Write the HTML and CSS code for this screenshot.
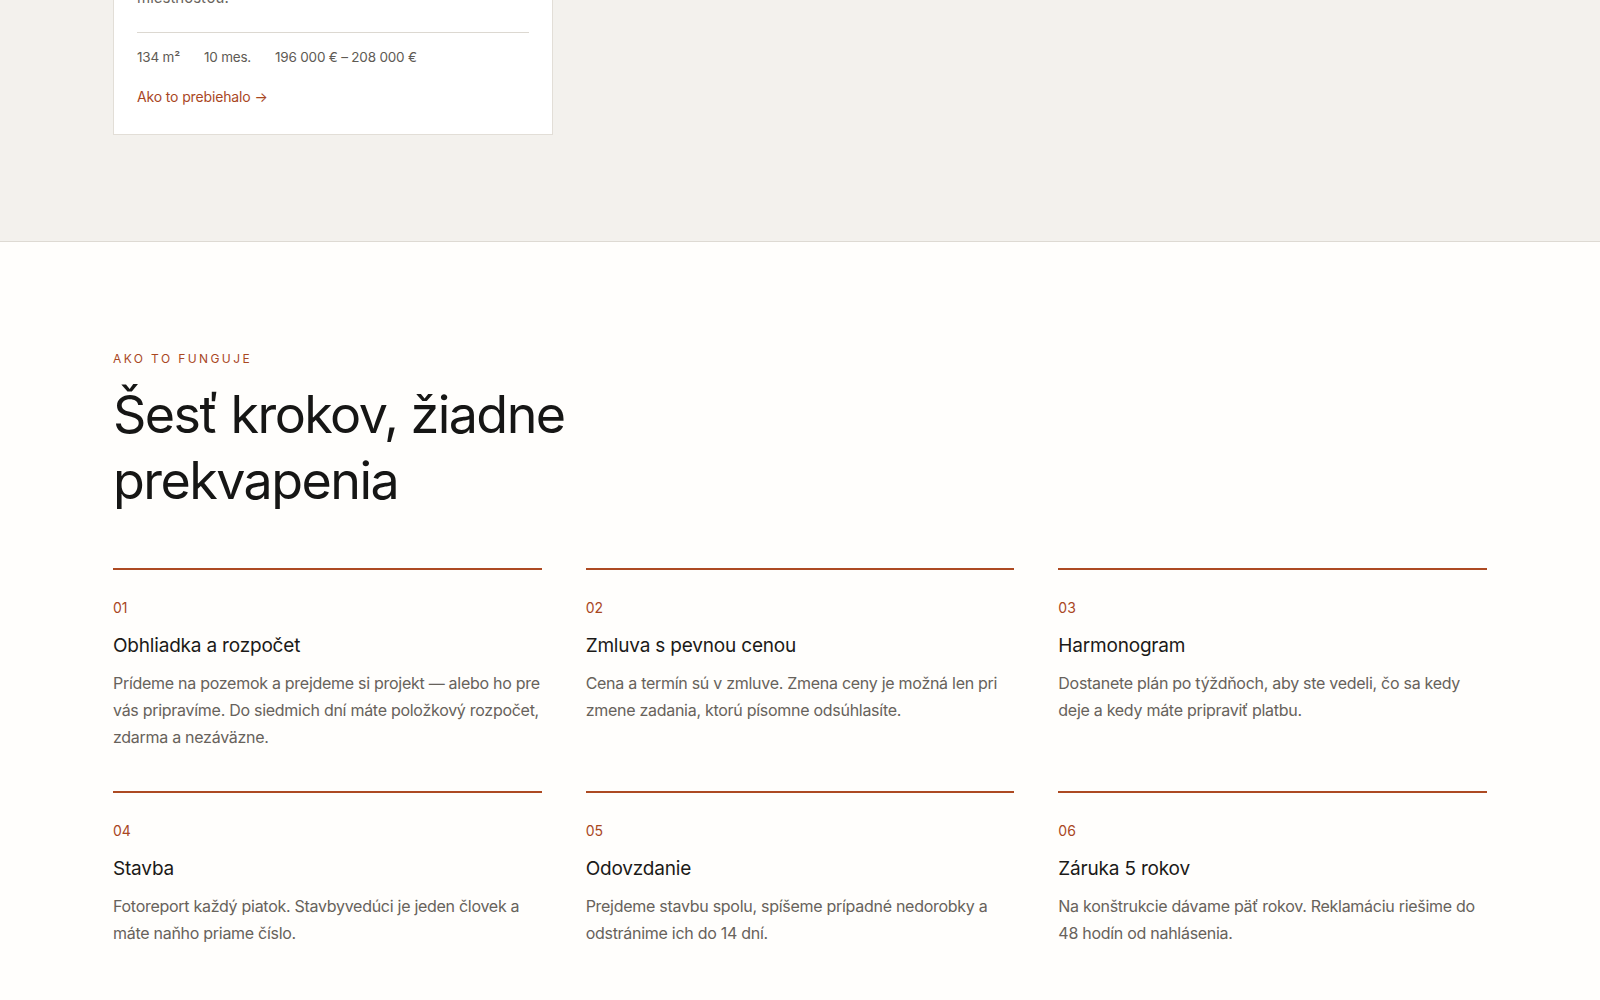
FILE: index.html
```html
<!DOCTYPE html>
<html lang="sk">
<head>
<meta charset="UTF-8">
<meta name="viewport" content="width=device-width, initial-scale=1.0">
<title>Ako to funguje</title>
<link rel="stylesheet" href="styles.css">
</head>
<body>
<section class="projects">
    <div class="container">
        <article class="project-card">
            <p class="project-text">Prízemný dom pre päťčlennú rodinu s&nbsp;veľkou dennou<br>miestnosťou.</p>
            <div class="project-meta">
                <span>134 m²</span>
                <span>10 mes.</span>
                <span>196 000 € – 208 000 €</span>
            </div>
            <a class="project-link" href="#">Ako to prebiehalo →</a>
        </article>
    </div>
</section>

<section class="steps">
    <div class="container">
        <p class="eyebrow">Ako to funguje</p>
        <h2>Šesť krokov, žiadne<br>prekvapenia</h2>
        <div class="steps-grid">
            <div class="step">
                <span class="step-num">01</span>
                <h3>Obhliadka a rozpočet</h3>
                <p>Prídeme na pozemok a prejdeme si projekt — alebo ho pre vás pripravíme. Do siedmich dní máte položkový rozpočet, zdarma a nezáväzne.</p>
            </div>
            <div class="step">
                <span class="step-num">02</span>
                <h3>Zmluva s pevnou cenou</h3>
                <p>Cena a termín sú v zmluve. Zmena ceny je možná len pri zmene zadania, ktorú písomne odsúhlasíte.</p>
            </div>
            <div class="step">
                <span class="step-num">03</span>
                <h3>Harmonogram</h3>
                <p>Dostanete plán po týždňoch, aby ste vedeli, čo sa kedy deje a kedy máte pripraviť platbu.</p>
            </div>
            <div class="step">
                <span class="step-num">04</span>
                <h3>Stavba</h3>
                <p>Fotoreport každý piatok. Stavbyvedúci je jeden človek a máte naňho priame číslo.</p>
            </div>
            <div class="step">
                <span class="step-num">05</span>
                <h3>Odovzdanie</h3>
                <p>Prejdeme stavbu spolu, spíšeme prípadné nedorobky a odstránime ich do 14 dní.</p>
            </div>
            <div class="step">
                <span class="step-num">06</span>
                <h3>Záruka 5 rokov</h3>
                <p>Na konštrukcie dávame päť rokov. Reklamáciu riešime do 48 hodín od nahlásenia.</p>
            </div>
        </div>
    </div>
</section>
</body>
</html>
```

FILE: styles.css
```css
/* Base */
body {
    margin: 0;
    font-family: Inter, "Liberation Sans", sans-serif;
    color: #1b1a18;
    background: #fffefc;
}
.container {
    max-width: 1374px;
    margin: 0 auto;
}

/* Projects strip (end of the references section) */
.projects {
    background: #f3f1ed;
    border-bottom: 1px solid #dedad3;
    padding-bottom: 106px;
    margin-top: -138px;
}
.project-card {
    width: 440px;
    box-sizing: border-box;
    background: #fff;
    border: 1px solid #e2ded7;
    padding: 99px 23px 27px;
}
.project-text {
    margin: 0 0 22px;
    font-size: 15px;
    line-height: 24px;
    color: #68635c;
}
.project-meta {
    display: flex;
    gap: 24px;
    border-top: 1px solid #dcd8d1;
    padding-top: 14px;
    font-size: 13.5px;
    line-height: 20px;
    letter-spacing: -0.015em;
    color: #5e5a54;
}
.project-link {
    display: inline-block;
    margin-top: 20px;
    font-size: 14px;
    line-height: 20px;
    letter-spacing: -0.01em;
    color: #a9471f;
    text-decoration: none;
}

/* How it works */
.steps {
    padding: 108px 0 80px;
}
.eyebrow {
    margin: 0;
    font-size: 12px;
    line-height: 18px;
    letter-spacing: 0.2em;
    text-transform: uppercase;
    color: #a9471f;
}
.steps h2 {
    margin: 14px 0 0;
    font-size: 52px;
    line-height: 66px;
    font-weight: 400;
    letter-spacing: -0.03em;
    color: #161615;
}
.steps-grid {
    display: grid;
    grid-template-columns: repeat(3, 1fr);
    column-gap: 44px;
    row-gap: 40px;
    margin-top: 54px;
}
.step {
    border-top: 2px solid #ad4a22;
    padding-top: 28px;
}
.step-num {
    display: block;
    font-size: 14px;
    line-height: 20px;
    color: #a9471f;
}
.step h3 {
    margin: 14px 0 10px;
    font-size: 19px;
    line-height: 28px;
    font-weight: 400;
    letter-spacing: -0.01em;
    color: #1b1a18;
}
.step p {
    margin: 0;
    font-size: 16px;
    line-height: 27px;
    letter-spacing: -0.28px;
    color: #67625b;
}
```
